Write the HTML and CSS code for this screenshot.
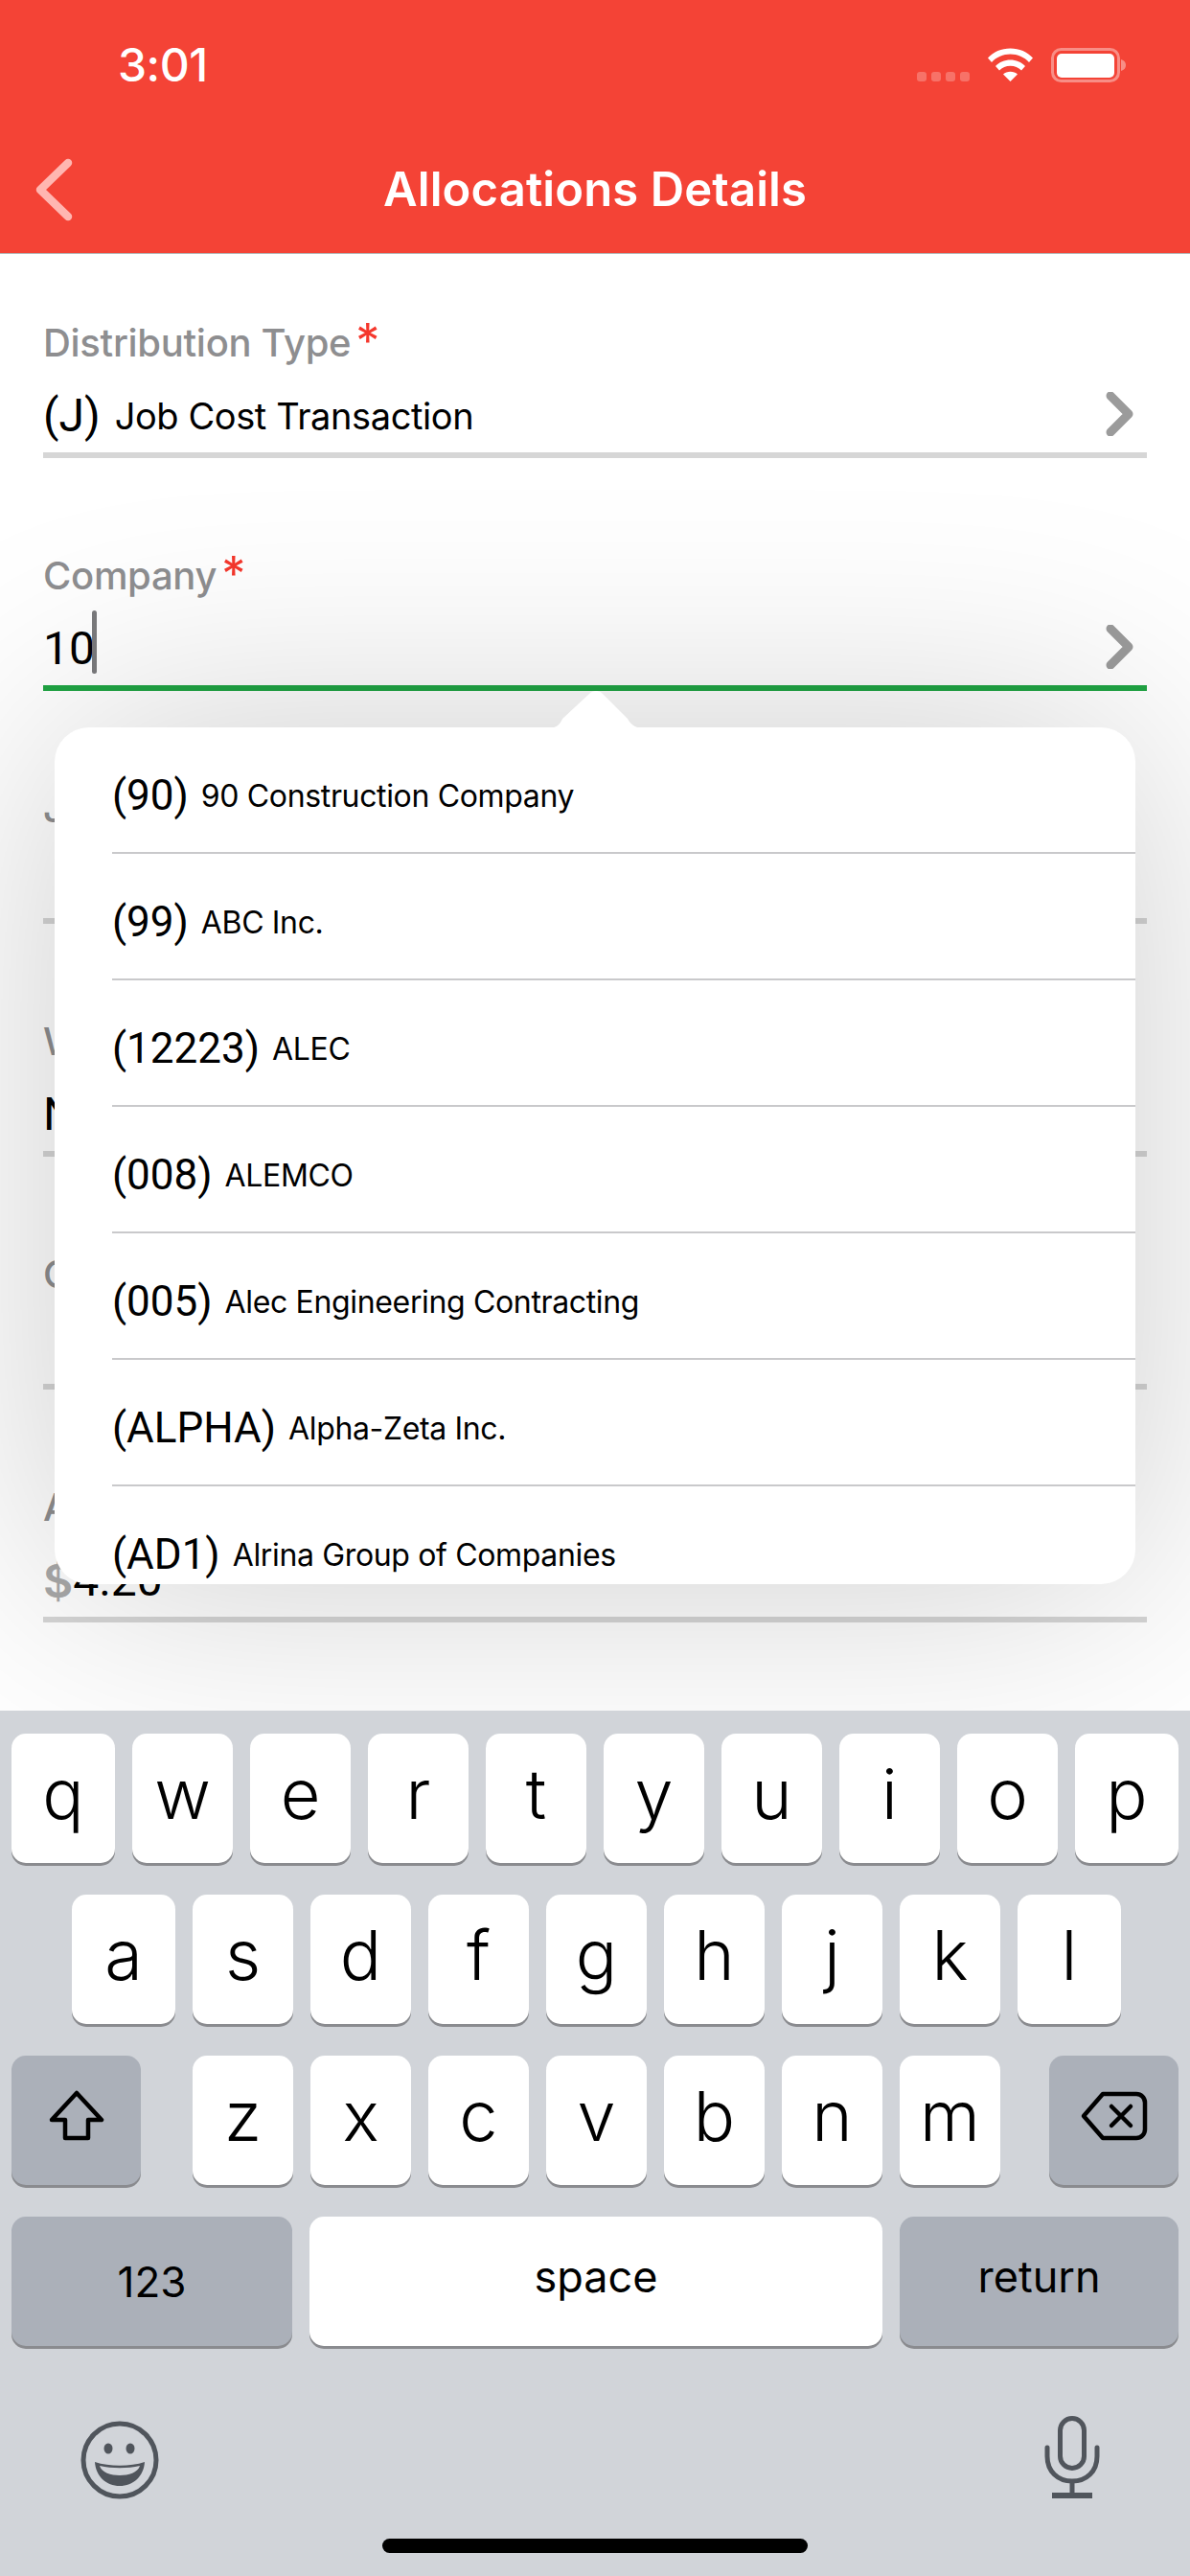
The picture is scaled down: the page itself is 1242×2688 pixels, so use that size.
FILE: index.html
```html
<!DOCTYPE html>
<html lang="en">
<head>
<meta charset="utf-8">
<title>Allocations Details</title>
<link rel="stylesheet" href="styles.css">
</head>
<body>
<div class="screen">
  <header class="header">
    <div class="status">
      <span class="time">3:01</span>
      <div class="status-icons">
        <div class="signal"><i></i><i></i><i></i><i></i></div>
        <svg class="wifi" width="47" height="35" viewBox="0 0 47 35"><path fill="#fff" d="M0 10.5C6 4 14 0.5 23.5 0.5S41 4 47 10.5L43 15C38 9.5 31 6.500 23.500 6.500S9 9.500 4 15Z"/><path fill="#fff" d="M8 19C12 14.800 17.500 12.500 23.500 12.500S35 14.800 39 19L35 23.500C32 20.500 28 18.800 23.500 18.800S15 20.500 12 23.500Z"/><path fill="#fff" d="M16 27.500C18 25.700 20.500 24.700 23.500 24.700S29 25.700 31 27.500L23.500 35Z"/></svg>
        <svg class="battery" width="80" height="36" viewBox="0 0 80 36"><rect x="1.500" y="1.500" width="69" height="33" rx="9" fill="none" stroke="#fff" stroke-opacity=".4" stroke-width="3"/><rect x="6" y="6" width="60" height="25" rx="5" fill="#fff"/><path d="M73 12C76.500 13 78 15 78 18S76.500 23 73 24Z" fill="#fff" fill-opacity=".4"/></svg>
      </div>
    </div>
    <nav class="nav">
      <svg class="back" width="40" height="66" viewBox="0 0 40 66"><path d="M35 5L6 33L35 61" fill="none" stroke="#ffb6b1" stroke-width="8.500" stroke-linecap="round" stroke-linejoin="round"/></svg>
      <h1 class="title">Allocations Details</h1>
    </nav>
  </header>

  <main class="form">
    <div class="field">
      <div class="label">Distribution Type<span class="req">*</span></div>
      <div class="value"><span class="code">(J)</span><span class="name">Job Cost Transaction</span><svg class="chev" width="30" height="46" viewBox="0 0 30 46"><path d="M5 4L24 23L5 42" fill="none" stroke="#9b9b9b" stroke-width="9" stroke-linecap="round" stroke-linejoin="round"/></svg></div>
    </div>
    <div class="field focused">
      <div class="label">Company<span class="req">*</span></div>
      <div class="value"><span class="code">10</span><span class="caret"></span><svg class="chev" width="30" height="46" viewBox="0 0 30 46"><path d="M5 4L24 23L5 42" fill="none" stroke="#9b9b9b" stroke-width="9" stroke-linecap="round" stroke-linejoin="round"/></svg></div>
    </div>
    <div class="field">
      <div class="label">Job</div>
      <div class="value"></div>
    </div>
    <div class="field">
      <div class="label">Work</div>
      <div class="value"><span class="code">N</span></div>
    </div>
    <div class="field">
      <div class="label">Cost</div>
      <div class="value"></div>
    </div>
    <div class="field">
      <div class="label">Amount</div>
      <div class="value"><span class="dollar">$</span><span class="code">4.20</span></div>
    </div>

    <div class="pop">
      <svg class="pop-tip" width="104" height="40" viewBox="0 0 104 40"><path d="M0 39C10 39 14 36 17 29L45 3C48 -1 56 -1 59 3L85 29C89 36 94 39 104 39V40H0Z" fill="#fff"/></svg>
      <ul class="pop-list">
        <li class="opt"><span class="code">(90)</span><span class="opt-name">90 Construction Company</span></li>
        <li class="opt"><span class="code">(99)</span><span class="opt-name">ABC Inc.</span></li>
        <li class="opt"><span class="code">(12223)</span><span class="opt-name">ALEC</span></li>
        <li class="opt"><span class="code">(008)</span><span class="opt-name">ALEMCO</span></li>
        <li class="opt"><span class="code">(005)</span><span class="opt-name">Alec Engineering Contracting</span></li>
        <li class="opt"><span class="code">(ALPHA)</span><span class="opt-name">Alpha-Zeta Inc.</span></li>
        <li class="opt"><span class="code">(AD1)</span><span class="opt-name">Alrina Group of Companies</span></li>
      </ul>
    </div>
  </main>

  <section class="kb">
    <div class="kb-row"><b class="key edge">q</b><b class="key">w</b><b class="key">e</b><b class="key">r</b><b class="key">t</b><b class="key">y</b><b class="key">u</b><b class="key">i</b><b class="key">o</b><b class="key edge">p</b></div>
    <div class="kb-row indent"><b class="key edge">a</b><b class="key">s</b><b class="key">d</b><b class="key">f</b><b class="key">g</b><b class="key">h</b><b class="key">j</b><b class="key">k</b><b class="key edge">l</b></div>
    <div class="kb-row split">
      <b class="key mod shift"><svg width="60" height="54" viewBox="0 0 60 54"><path d="M30 3L56 31H42V50H18V31H4Z" fill="none" stroke="#000" stroke-width="4.500" stroke-linejoin="round"/></svg></b>
      <div class="letters"><b class="key">z</b><b class="key">x</b><b class="key">c</b><b class="key">v</b><b class="key">b</b><b class="key">n</b><b class="key">m</b></div>
      <b class="key mod shift"><svg width="70" height="52" viewBox="0 0 70 52"><path d="M23 3H58C63 3 67 7 67 12V40C67 45 63 49 58 49H23L3 26Z" fill="none" stroke="#000" stroke-width="4.500" stroke-linejoin="round"/><path d="M32 16L52 36M52 16L32 36" fill="none" stroke="#000" stroke-width="4.500" stroke-linecap="round"/></svg></b>
    </div>
    <div class="kb-row">
      <b class="key mod label-key num">123</b>
      <b class="key space label-key">space</b>
      <b class="key mod label-key ret">return</b>
    </div>
    <div class="kb-tools">
      <svg class="emoji" width="82" height="82" viewBox="0 0 82 82"><circle cx="41" cy="41" r="38" fill="none" stroke="#50555c" stroke-width="5"/><ellipse cx="29" cy="29" rx="4.500" ry="5.500" fill="#50555c"/><ellipse cx="52" cy="29" rx="4.500" ry="5.500" fill="#50555c"/><path d="M15 43C30 48 52 48 67 43C66 58 55 68 41 68S16 58 15 43Z" fill="#50555c"/><path d="M20 47C33 50 49 50 62 47C60 54 50 57 41 57S22 54 20 47Z" fill="#d1d4d9"/></svg>
      <svg width="58" height="86" viewBox="0 0 58 86"><rect x="16.500" y="2.500" width="25" height="52" rx="12.500" fill="none" stroke="#50555c" stroke-width="5"/><path d="M3 33V42C3 58 14 68 29 68S55 58 55 42V33" fill="none" stroke="#50555c" stroke-width="5" stroke-linecap="round"/><path d="M29 68V82" stroke="#50555c" stroke-width="5"/><path d="M8 83H50" stroke="#50555c" stroke-width="6"/></svg>
    </div>
    <div class="home"></div>
  </section>
</div>
</body>
</html>
```

FILE: styles.css
```css
* { box-sizing: border-box; }
html, body { margin: 0; padding: 0; }
body { font-family: Inter, Roboto, "Liberation Sans", sans-serif; background: #fff; }
.screen { width: 1242px; height: 2688px; display: flex; flex-direction: column; overflow: hidden; position: relative; }

.header { height: 265px; background: #f44336; border-bottom: 1px solid #b4b4b4; position: relative; z-index: 3; color: #fff; flex: none; }
.status { height: 132px; padding: 0 65px 0 123px; display: flex; justify-content: space-between; }
.time { font-size: 48px; font-weight: 500; line-height: 136px; letter-spacing: -0.5px; }
.status-icons { display: flex; align-items: flex-start; padding-top: 50px; }
.signal { display: flex; gap: 5px; margin: 25px 19px 0 0; }
.signal i { width: 10px; height: 10px; border-radius: 3px; background: rgba(255,255,255,.25); }
.wifi { margin-right: 19px; }
.nav { height: 132px; position: relative; display: flex; align-items: center; justify-content: center; }
.back { position: absolute; left: 36px; top: 33px; }
.title { margin: 0; font-size: 49px; font-weight: 600; line-height: 132px; padding-bottom: 32px; height: 132px; letter-spacing: 0.1px; }

.form { flex: 1; position: relative; padding: 69px 45px 0; overflow: hidden; min-height: 0; }
.field { height: 243px; display: flex; flex-direction: column; }
.label { font-size: 40px; font-weight: 500; color: #8e8e90; line-height: 48px; height: 48px; white-space: nowrap; letter-spacing: -0.3px; }
.req { color: #f5372c; font-size: 50px; font-weight: 400; margin-left: 5px; line-height: 30px; vertical-align: -2px; }
.value { height: 96px; padding-top: 14px; border-bottom: 6px solid #d6d6d6; display: flex; align-items: center; white-space: pre; color: #000; position: relative; }
.focused .value { border-bottom-color: #20a544; }
.code { font-family: Roboto, Inter, sans-serif; font-size: 48px; line-height: 1; }
.name { font-size: 38px; letter-spacing: -0.4px; margin-left: 15px; }
.dollar { font-size: 48px; font-weight: 600; color: #a9a9a9; }
.caret { width: 5px; height: 66px; background: #7b7b7d; border-radius: 3px; margin: -14px 0 0 -3px; }
.chev { position: absolute; right: 13px; top: 27px; }

.pop { position: absolute; left: 57px; top: 494px; width: 1128px; height: 894px; background: #fff; border-radius: 36px; box-shadow: 0 0 440px rgba(0,0,0,.2); z-index: 2; }
.pop-tip { position: absolute; left: 513px; top: -38px; }
.pop-list { list-style: none; margin: 0; padding: 0 0 0 60px; height: 100%; overflow: hidden; border-radius: 36px; }
.opt { height: 132px; border-bottom: 2px solid #c9c9cb; display: flex; align-items: center; white-space: pre; color: #000; padding-top: 12px; flex: none; }
.opt .code { font-size: 44px; }
.opt-name { font-size: 32px; letter-spacing: -0.35px; margin-left: 13px; }

.kb { flex: none; height: 903px; background: #d1d4d9; padding: 24px 12px 0; position: relative; z-index: 3; }
.kb-row { display: flex; gap: 18px; height: 135px; margin-bottom: 33px; }
.kb-row.indent { padding-left: 63px; }
.letters { display: flex; gap: 18px; margin: 0 auto 0 36px; }
.key { width: 105px; height: 135px; background: #fff; border-radius: 15px; box-shadow: 0 3px 0 #8a8b8f; display: flex; align-items: center; justify-content: center; font-size: 72px; font-weight: 300; color: #000; padding-bottom: 10px; flex: none; }
.key.edge { width: 108px; }
.mod { background: #abb0b9; }
.shift { width: 135px; }
.label-key { font-size: 45px; font-weight: 400; }
.space { flex: 1; width: auto; }
.num { font-size: 44px; padding-bottom: 0; width: 293px; }
.ret { width: 291px; }
.kb-tools { display: flex; justify-content: space-between; align-items: flex-start; padding: 0 82px 0 72px; margin-top: 73px; }
.emoji { margin-top: 5px; }
.home { position: absolute; left: 399px; top: 864px; width: 444px; height: 15px; background: #000; border-radius: 8px; }
```
